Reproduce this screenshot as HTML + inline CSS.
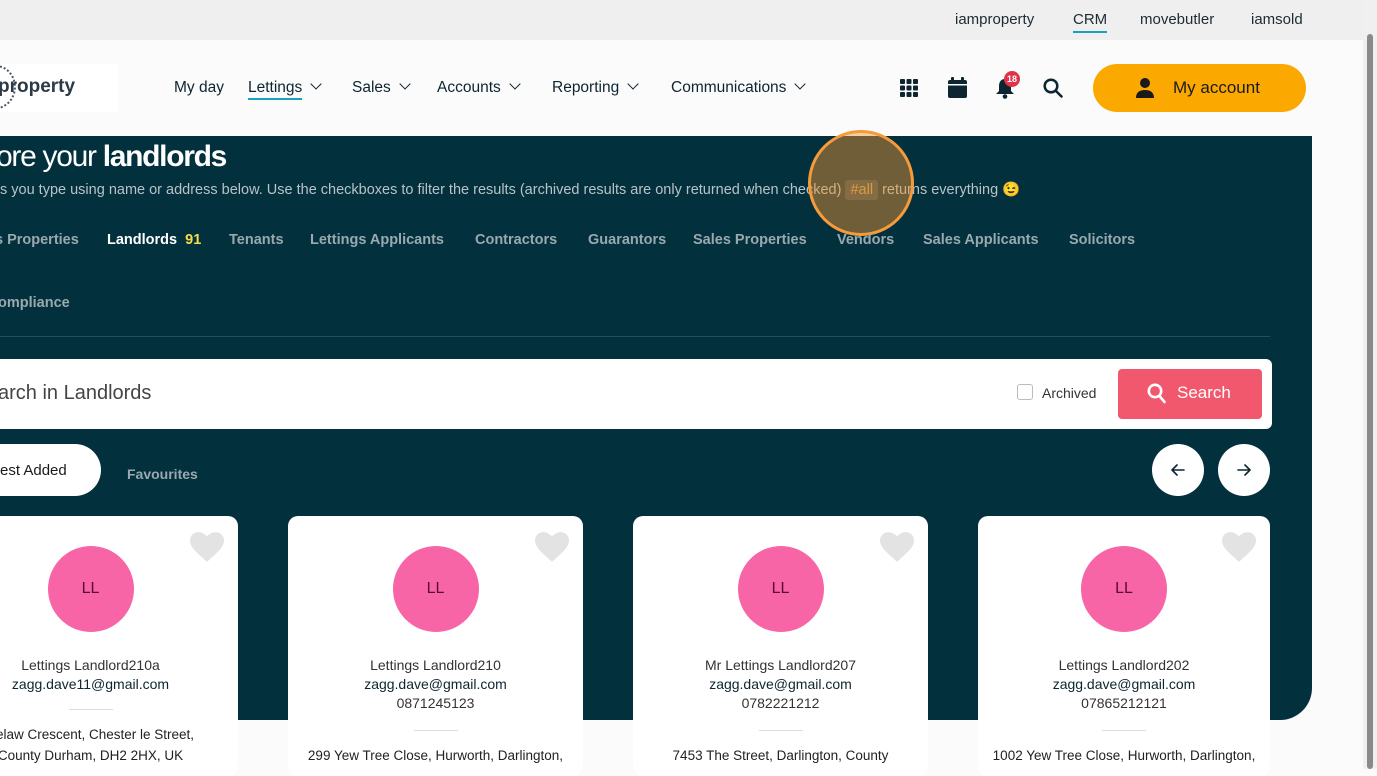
<!DOCTYPE html>
<html><head><meta charset="utf-8"><style>
*{box-sizing:border-box;margin:0;padding:0}
body{width:1377px;height:769px;overflow:hidden;background:#fbfbfb;font-family:"Liberation Sans",sans-serif;position:relative;color:#0a2a35}
.top{position:absolute;left:0;top:0;width:1363px;height:40px;background:#efefef}
.top a{position:absolute;top:11px;font-size:15px;color:#1d2b33}
.hdr{position:absolute;left:0;top:40px;width:1363px;height:96px;background:#fbfbfb}
.nav{position:absolute;top:79px;font-size:15.5px;color:#0d2530}
.chev{display:inline-block;width:8px;height:8px;border-right:1.3px solid #0d2530;border-bottom:1.3px solid #0d2530;transform:rotate(45deg);margin-left:10px;position:relative;top:-4px}
.panel{position:absolute;left:0;top:136px;width:1312px;height:584px;background:#02303d;border-bottom-right-radius:32px}
.w{position:absolute;color:#fff}
.tab{position:absolute;top:232px;font-size:14.5px;font-weight:bold;color:#9aa9ae}
.card{position:absolute;top:516px;width:295px;height:260px;background:#fff;border-radius:10px;text-align:center}
.av{position:absolute;left:50%;margin-left:-43px;top:30px;width:86px;height:86px;border-radius:50%;background:#f765a6;color:#5a0b33;font-size:16px;line-height:86px}
.nm{position:absolute;left:0;right:0;top:140px;font-size:14px;color:#333;line-height:19px}
.nm b{color:#0d2530;font-weight:normal}
.hr{position:absolute;left:50%;margin-left:-22px;width:44px;border-top:1px solid #ddd}
.ad{position:absolute;left:0;right:0;font-size:13.5px;color:#222;line-height:21px}
.heart{position:absolute;right:14px;top:16px}
.rb{position:absolute;top:444px;width:52px;height:52px;border-radius:50%;background:#fff}
.rb svg{position:absolute;left:19px;top:19px}
</style></head><body>
<div class="top">
<a style="left:955px">iamproperty</a>
<a style="left:1073px;border-bottom:2px solid #1aa0c0;padding-bottom:3px">CRM</a>
<a style="left:1140px">movebutler</a>
<a style="left:1251px">iamsold</a>
</div>
<div style="position:absolute;right:0;top:0;width:14px;height:769px;background:#f0f0f0"><div style="position:absolute;left:4px;top:34px;width:6px;height:735px;background:#8a8a8a;border-radius:3px"></div></div>
<div class="hdr">
<div style="position:absolute;left:0;top:24px;width:118px;height:48px;background:#fff"></div>
<div style="position:absolute;left:-24px;top:25px;width:40px;height:44px;border:2px dotted #4a5560;border-radius:50%"></div>
<div style="position:absolute;left:-2px;top:36px;font-size:19px;font-weight:bold;color:#2c3a45">property</div>
</div>
<div class="nav" style="left:174px">My day</div>
<div class="nav" style="left:248px"><span style="border-bottom:2px solid #1aa0c0;padding-bottom:2px">Lettings</span><span class="chev"></span></div>
<div class="nav" style="left:352px">Sales<span class="chev"></span></div>
<div class="nav" style="left:437px">Accounts<span class="chev"></span></div>
<div class="nav" style="left:552px">Reporting<span class="chev"></span></div>
<div class="nav" style="left:671px">Communications<span class="chev"></span></div>
<svg style="position:absolute;left:900px;top:79px" width="18" height="18" viewBox="0 0 18 18" fill="#0d2530"><rect x="0" y="0" width="5" height="5" rx="1"/><rect x="6.5" y="0" width="5" height="5" rx="1"/><rect x="13" y="0" width="5" height="5" rx="1"/><rect x="0" y="6.5" width="5" height="5" rx="1"/><rect x="6.5" y="6.5" width="5" height="5" rx="1"/><rect x="13" y="6.5" width="5" height="5" rx="1"/><rect x="0" y="13" width="5" height="5" rx="1"/><rect x="6.5" y="13" width="5" height="5" rx="1"/><rect x="13" y="13" width="5" height="5" rx="1"/></svg>
<svg style="position:absolute;left:948px;top:77px" width="19" height="21" viewBox="0 0 19 21" fill="#0d2530"><rect x="0" y="3" width="19" height="18" rx="2"/><rect x="3" y="0" width="3" height="5" rx="1"/><rect x="13" y="0" width="3" height="5" rx="1"/><rect x="0" y="7" width="19" height="1.5" fill="#fff"/></svg>
<svg style="position:absolute;left:995px;top:78px" width="20" height="21" viewBox="0 0 20 21" fill="#0d2530"><path d="M10 1c-4 0-6 3-6 7v5l-3 3h18l-3-3V8c0-4-2-7-6-7z"/><circle cx="10" cy="18.5" r="2.3"/></svg>
<div style="position:absolute;left:1004px;top:71px;width:16px;height:16px;border-radius:50%;background:#e0334a;color:#fff;font-size:9px;font-weight:bold;text-align:center;line-height:16px">18</div>
<svg style="position:absolute;left:1043px;top:78px" width="20" height="20" viewBox="0 0 20 20" fill="none" stroke="#0d2530" stroke-width="2.5"><circle cx="8" cy="8" r="6.3"/><path d="M12.6 12.6L18.5 18.5" stroke-linecap="round"/></svg>
<div style="position:absolute;left:1093px;top:64px;width:213px;height:48px;border-radius:24px;background:#fba800"></div>
<svg style="position:absolute;left:1135px;top:78px" width="20" height="20" viewBox="0 0 20 20" fill="#1a1a1a"><circle cx="10" cy="5" r="5"/><path d="M1 20c0-6 4-8 9-8s9 2 9 8z"/></svg>
<div style="position:absolute;left:1173px;top:78px;font-size:17px;color:#1a1a1a">My account</div>

<div class="panel"></div>
<div class="w" style="left:-4px;top:140px;font-size:30px;letter-spacing:-1.3px">ore your <b>landlords</b></div>
<div class="w" style="left:0;top:181px;font-size:14.5px;color:#b9c3c7;letter-spacing:0;white-space:nowrap">s you type using name or address below. Use the checkboxes to filter the results (archived results are only returned when checked) <span style="background:#2a4a54;color:#c6a246;padding:2px 5px;border-radius:3px">#all</span> returns everything 😉</div>
<div style="position:absolute;left:808px;top:130px;width:106px;height:106px;border-radius:50%;background:rgba(245,150,50,.45);border:3px solid #f79a3a"></div>
<div class="tab" style="left:-5px">s Properties</div>
<div class="tab" style="left:107px;color:#fff">Landlords <span style="color:#f5dd4a;margin-left:4px">91</span></div>
<div class="tab" style="left:229px">Tenants</div>
<div class="tab" style="left:310px">Lettings Applicants</div>
<div class="tab" style="left:475px">Contractors</div>
<div class="tab" style="left:588px">Guarantors</div>
<div class="tab" style="left:693px">Sales Properties</div>
<div class="tab" style="left:837px">Vendors</div>
<div class="tab" style="left:923px">Sales Applicants</div>
<div class="tab" style="left:1069px">Solicitors</div>
<div class="tab" style="left:-2px;top:295px">ompliance</div>
<div style="position:absolute;left:0;top:336px;width:1270px;border-top:1px solid #2a4e58"></div>
<div style="position:absolute;left:0;top:359px;width:1272px;height:70px;background:#fff;border-radius:0 6px 6px 0"></div>
<div style="position:absolute;left:-2px;top:382px;font-size:20px;color:#444">arch in Landlords</div>
<div style="position:absolute;left:1017px;top:384px;width:16px;height:16px;border:1px solid #bbb;border-radius:3px"></div>
<div style="position:absolute;left:1042px;top:385px;font-size:14px;color:#333">Archived</div>
<div style="position:absolute;left:1118px;top:369px;width:144px;height:50px;background:#f2586d;border-radius:4px"></div>
<svg style="position:absolute;left:1147px;top:383px" width="20" height="21" viewBox="0 0 20 21" fill="none" stroke="#fff" stroke-width="2.6"><circle cx="8" cy="8" r="6.2"/><path d="M12.5 13L17.5 19" stroke-linecap="round"/></svg>
<div style="position:absolute;left:1177px;top:383px;font-size:17px;color:#fff">Search</div>
<div style="position:absolute;left:-30px;top:444px;width:131px;height:52px;border-radius:26px;background:#fff"></div>
<div style="position:absolute;left:0;top:462px;font-size:15px;color:#1a1a1a">est Added</div>
<div style="position:absolute;left:127px;top:466px;font-size:14px;font-weight:bold;color:#9aa9ae">Favourites</div>
<div class="rb" style="left:1152px"><svg width="14" height="14" viewBox="0 0 14 14" fill="none" stroke="#0d2530" stroke-width="1.6" stroke-linecap="round" stroke-linejoin="round"><path d="M13 7H1M6 2L1 7l5 5"/></svg></div>
<div class="rb" style="left:1218px"><svg width="14" height="14" viewBox="0 0 14 14" fill="none" stroke="#0d2530" stroke-width="1.6" stroke-linecap="round" stroke-linejoin="round"><path d="M1 7h12M8 2l5 5-5 5"/></svg></div>

<div class="card" style="left:-57px">
<svg class="heart" width="34" height="30" viewBox="0 0 24 21"><path d="M12 21L10.3 19.4C4 13.8 0 10.2 0 5.8 0 2.3 2.7 0 6 0c1.9 0 3.9.9 6 3 2.1-2.1 4.1-3 6-3 3.3 0 6 2.3 6 5.8 0 4.4-4 8-10.3 13.6z" fill="#e3e3e3"/></svg>
<div class="av">LL</div>
<div class="nm">Lettings Landlord210a<br><b>zagg.dave11@gmail.com</b></div>
<div class="hr" style="top:193px"></div>
<div class="ad" style="top:208px">Pelaw Crescent, Chester le Street,<br>County Durham, DH2 2HX, UK</div>
</div>
<div class="card" style="left:288px">
<svg class="heart" width="34" height="30" viewBox="0 0 24 21"><path d="M12 21L10.3 19.4C4 13.8 0 10.2 0 5.8 0 2.3 2.7 0 6 0c1.9 0 3.9.9 6 3 2.1-2.1 4.1-3 6-3 3.3 0 6 2.3 6 5.8 0 4.4-4 8-10.3 13.6z" fill="#e3e3e3"/></svg>
<div class="av">LL</div>
<div class="nm">Lettings Landlord210<br><b>zagg.dave@gmail.com</b><br>0871245123</div>
<div class="hr" style="top:214px"></div>
<div class="ad" style="top:229px">299 Yew Tree Close, Hurworth, Darlington,</div>
</div>
<div class="card" style="left:633px">
<svg class="heart" width="34" height="30" viewBox="0 0 24 21"><path d="M12 21L10.3 19.4C4 13.8 0 10.2 0 5.8 0 2.3 2.7 0 6 0c1.9 0 3.9.9 6 3 2.1-2.1 4.1-3 6-3 3.3 0 6 2.3 6 5.8 0 4.4-4 8-10.3 13.6z" fill="#e3e3e3"/></svg>
<div class="av">LL</div>
<div class="nm">Mr Lettings Landlord207<br><b>zagg.dave@gmail.com</b><br>0782221212</div>
<div class="hr" style="top:214px"></div>
<div class="ad" style="top:229px">7453 The Street, Darlington, County</div>
</div>
<div class="card" style="left:978px;width:292px">
<svg class="heart" width="34" height="30" viewBox="0 0 24 21"><path d="M12 21L10.3 19.4C4 13.8 0 10.2 0 5.8 0 2.3 2.7 0 6 0c1.9 0 3.9.9 6 3 2.1-2.1 4.1-3 6-3 3.3 0 6 2.3 6 5.8 0 4.4-4 8-10.3 13.6z" fill="#e3e3e3"/></svg>
<div class="av">LL</div>
<div class="nm">Lettings Landlord202<br><b>zagg.dave@gmail.com</b><br>07865212121</div>
<div class="hr" style="top:214px"></div>
<div class="ad" style="top:229px">1002 Yew Tree Close, Hurworth, Darlington,</div>
</div>
</body></html>
